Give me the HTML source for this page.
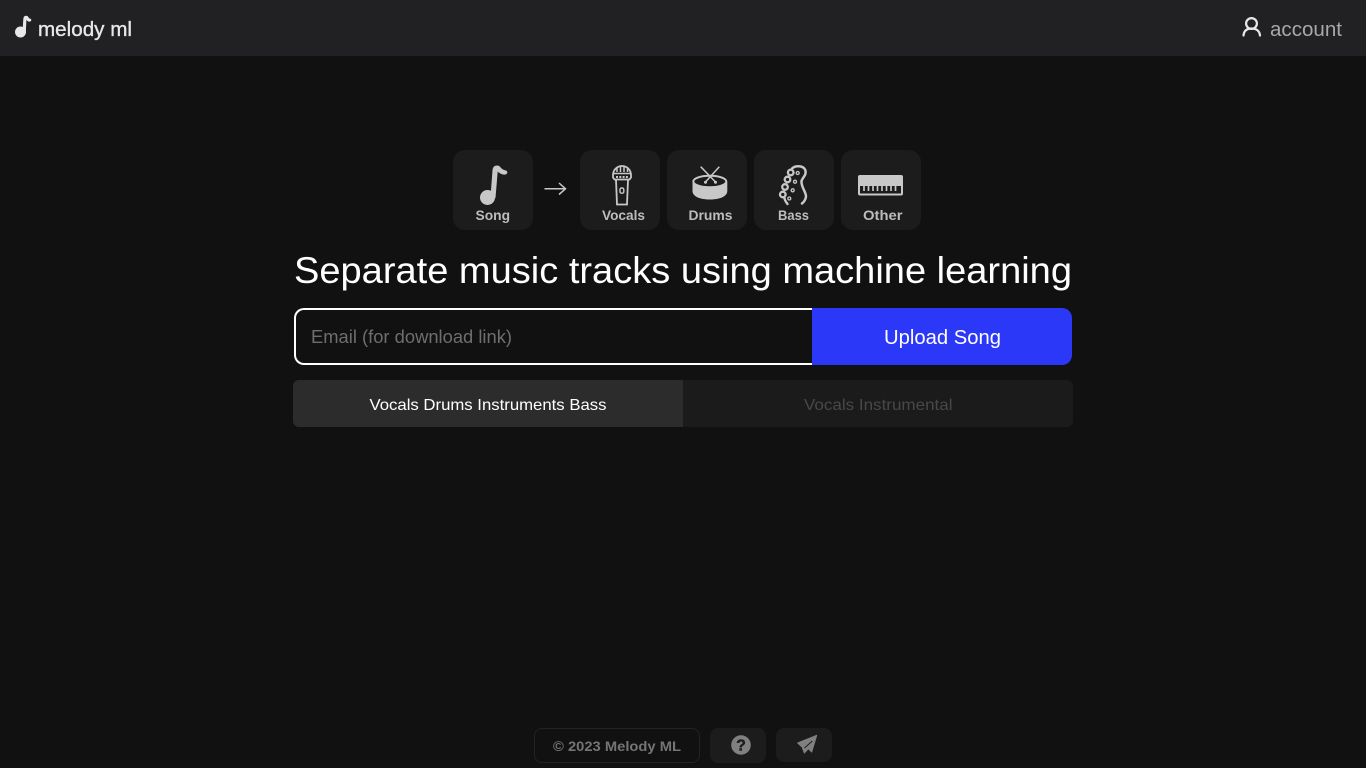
<!DOCTYPE html>
<html lang="en">
<head>
<meta charset="utf-8">
<title>Melody ML</title>
<style>
html,body{margin:0;padding:0;width:1366px;height:768px;overflow:hidden;background:#111;}
body{position:relative;font-family:"Liberation Sans",sans-serif;}
.b{position:absolute;box-sizing:border-box;}
svg{position:absolute;left:0;top:0;}
text{font-family:"Liberation Sans",sans-serif;}
</style>
</head>
<body>
<div class="b" style="left:0;top:0;width:1366px;height:56px;background:#212123"></div>
<div class="b" style="left:453px;top:150px;width:80px;height:80px;background:#1c1c1c;border-radius:12px"></div>
<div class="b" style="left:580px;top:150px;width:80px;height:80px;background:#1c1c1c;border-radius:12px"></div>
<div class="b" style="left:667px;top:150px;width:80px;height:80px;background:#1c1c1c;border-radius:12px"></div>
<div class="b" style="left:754px;top:150px;width:80px;height:80px;background:#1c1c1c;border-radius:12px"></div>
<div class="b" style="left:841px;top:150px;width:80px;height:80px;background:#1c1c1c;border-radius:12px"></div>
<div class="b" style="left:294px;top:308px;width:519px;height:57px;border:2px solid #fff;border-right:0;border-radius:10px 0 0 10px;background:#111"></div>
<div class="b" style="left:812px;top:308px;width:260px;height:57px;background:#2b38f8;border-radius:0 10px 10px 0"></div>
<div class="b" style="left:293px;top:380px;width:390px;height:47px;background:#2c2c2c;border-radius:6px 0 0 6px"></div>
<div class="b" style="left:683px;top:380px;width:390px;height:47px;background:#1b1b1b;border-radius:0 6px 6px 0"></div>
<div class="b" style="left:534px;top:728px;width:166px;height:35px;border:1px solid #232323;border-radius:8px"></div>
<div class="b" style="left:710px;top:728px;width:56px;height:35px;background:#1c1c1c;border-radius:8px"></div>
<div class="b" style="left:776px;top:728px;width:56px;height:34px;background:#1c1c1c;border-radius:8px"></div>

<svg width="1366" height="768" viewBox="0 0 1366 768" xmlns="http://www.w3.org/2000/svg">
  <!-- nav note -->
  <circle cx="20.500" cy="32" r="5.500" fill="#e8e8e8"/>
  <path d="M22.500 32 L23.300 19 Q23.600 15.800 26 15.800 Q27.800 15.800 28.600 17.500 Q29.300 18.500 30.500 18.800 Q31.800 19.500 31 21 Q30 22 28.300 21.500 Q27.200 21 26.400 20 L25.800 33 Z" fill="#e8e8e8"/>
  <text x="38" y="36" font-size="20.500" fill="#e8e8e8" stroke="#e8e8e8" stroke-width=".35" textLength="94" lengthAdjust="spacingAndGlyphs">melody ml</text>
  <!-- account -->
  <circle cx="1251.500" cy="23.500" r="5.400" fill="none" stroke="#e8e8e8" stroke-width="2.200"/>
  <path d="M1243.500 35.500 C1244 30.500 1247 28.500 1251.500 28.500 C1256 28.500 1259.500 30.500 1260 35.500" fill="none" stroke="#e8e8e8" stroke-width="2.200" stroke-linecap="round"/>
  <text x="1270" y="36" font-size="20.500" fill="#a8a8a8" textLength="72" lengthAdjust="spacingAndGlyphs">account</text>

  <!-- song note -->
  <circle cx="487.500" cy="197.500" r="7.500" fill="#c8c8c8"/>
  <path d="M490.500 197 L492.500 170 Q493 165.500 497 165.500 Q499.500 165.500 501 168 Q503 170 506 170.500 Q508 171.500 507 173.500 Q506 175 503 174.500 Q499.500 173.500 497.700 171.500 L495.500 198 Z" fill="#c8c8c8"/>
  <text x="475.500" y="220" font-size="13.500" font-weight="700" fill="#bdbdbd" textLength="34.500" lengthAdjust="spacingAndGlyphs">Song</text>

  <!-- arrow -->
  <path d="M544.500 188.800 H565 M559 183 L565.500 188.800 L559 194.500" fill="none" stroke="#c8c8c8" stroke-width="1.500"/>

  <!-- mic -->
  <g fill="none" stroke="#c8c8c8" stroke-width="1.800">
    <path d="M613 177.500 V175 A9 9 0 0 1 631 175 V177.500 L629.500 179.500 H614.500 Z"/>
    <path d="M617 167 V172 M620.500 166.500 V172 M624 166.500 V172 M627.500 167 V172" stroke-width="1.500"/>
    <path d="M613 173.500 H631" stroke-width="1.500"/>
    <path d="M616 180 L617 204.500 H627 L628 180"/>
    <rect x="620" y="188" width="3.800" height="5.200" rx="1.500" stroke-width="1.400"/>
    <path d="M616 177 H628.500" stroke-width="2" stroke-dasharray="2 1.300"/>
  </g>
  <text x="602" y="220" font-size="13.500" font-weight="700" fill="#bdbdbd" textLength="43" lengthAdjust="spacingAndGlyphs">Vocals</text>

  <!-- drum -->
  <path d="M692.500 182 V191 C692.500 196.500 700 199.500 709.800 199.500 C719.500 199.500 727.300 196.500 727.300 191 V182 Z" fill="#c8c8c8"/>
  <ellipse cx="709.800" cy="181.500" rx="16.500" ry="5.700" fill="#1c1c1c" stroke="#c8c8c8" stroke-width="2"/>
  <path d="M700.700 166.700 L715.500 182 M719.300 166.700 L705.500 182" stroke="#c8c8c8" stroke-width="1.500" fill="none"/>
  <circle cx="705.500" cy="182.300" r="1.500" fill="#c8c8c8"/>
  <circle cx="715.500" cy="182.300" r="1.500" fill="#c8c8c8"/>
  <text x="688.500" y="220" font-size="13.500" font-weight="700" fill="#bdbdbd" textLength="44" lengthAdjust="spacingAndGlyphs">Drums</text>

  <!-- bass -->
  <g fill="none" stroke="#c8c8c8">
    <path d="M792 168.500 C795 165.500 803 165 805.300 170 C807 175 802.500 177.500 801.500 181 C801 187 805.500 191 806 196 C806 199 804 202 802 203.500" stroke-width="2.500" stroke-linecap="round"/>
    <path d="M784.500 198 C784.500 200 786 202 787.500 204" stroke-width="2.400" stroke-linecap="round"/>
    <circle cx="790.700" cy="172.500" r="2.800" stroke-width="2.300"/>
    <circle cx="787.500" cy="179.500" r="2.800" stroke-width="2.300"/>
    <circle cx="785" cy="187" r="2.800" stroke-width="2.300"/>
    <circle cx="782.800" cy="194.500" r="2.800" stroke-width="2.300"/>
    <circle cx="797.700" cy="173" r="1.500" stroke-width="1.300"/>
    <circle cx="795" cy="181.700" r="1.500" stroke-width="1.300"/>
    <circle cx="792.700" cy="190.300" r="1.500" stroke-width="1.300"/>
    <circle cx="789.300" cy="198.500" r="1.500" stroke-width="1.300"/>
  </g>
  <text x="778" y="220" font-size="13.500" font-weight="700" fill="#bdbdbd" textLength="31" lengthAdjust="spacingAndGlyphs">Bass</text>

  <!-- keyboard -->
  <rect x="858" y="175" width="45" height="20.500" rx="2" fill="#c8c8c8"/>
  <rect x="860" y="186" width="41" height="7.500" fill="#1c1c1c"/>
  <path d="M864 186 V191 M868.500 186 V191 M873 186 V191 M877.500 186 V191 M882 186 V191 M886.500 186 V191 M891 186 V191 M895.500 186 V191" stroke="#c8c8c8" stroke-width="1.700"/>
  <text x="863" y="220" font-size="13.500" font-weight="700" fill="#bdbdbd" textLength="39.500" lengthAdjust="spacingAndGlyphs">Other</text>

  <!-- heading -->
  <text x="294" y="283" font-size="37" fill="#fff" textLength="778" lengthAdjust="spacingAndGlyphs">Separate music tracks using machine learning</text>

  <text x="311" y="343" font-size="18" fill="#6e6e6e" textLength="201" lengthAdjust="spacingAndGlyphs">Email (for download link)</text>
  <text x="884" y="344" font-size="20" fill="#fff" textLength="117" lengthAdjust="spacingAndGlyphs">Upload Song</text>
  <text x="369.500" y="410" font-size="16" fill="#fff" textLength="237" lengthAdjust="spacingAndGlyphs">Vocals Drums Instruments Bass</text>
  <text x="804" y="410" font-size="16" fill="#484848" textLength="148.500" lengthAdjust="spacingAndGlyphs">Vocals Instrumental</text>

  <!-- footer -->
  <text x="553" y="751" font-size="14" font-weight="700" fill="#757575" textLength="128" lengthAdjust="spacingAndGlyphs">© 2023 Melody ML</text>
  <circle cx="741" cy="745" r="9.800" fill="#808080"/>
  <text x="741" y="750.700" font-size="16" font-weight="700" fill="#1c1c1c" stroke="#1c1c1c" stroke-width=".4" text-anchor="middle">?</text>
  <path d="M816.700 735.300 L797.700 743 L802.300 747.300 L804.300 753 L808.300 748.700 L811.700 752 Z" fill="#808080" stroke="#808080" stroke-width="1" stroke-linejoin="round"/>
  <path d="M804.500 748 L812.300 741" stroke="#1c1c1c" stroke-width="1" fill="none"/>
</svg>
</body>
</html>
